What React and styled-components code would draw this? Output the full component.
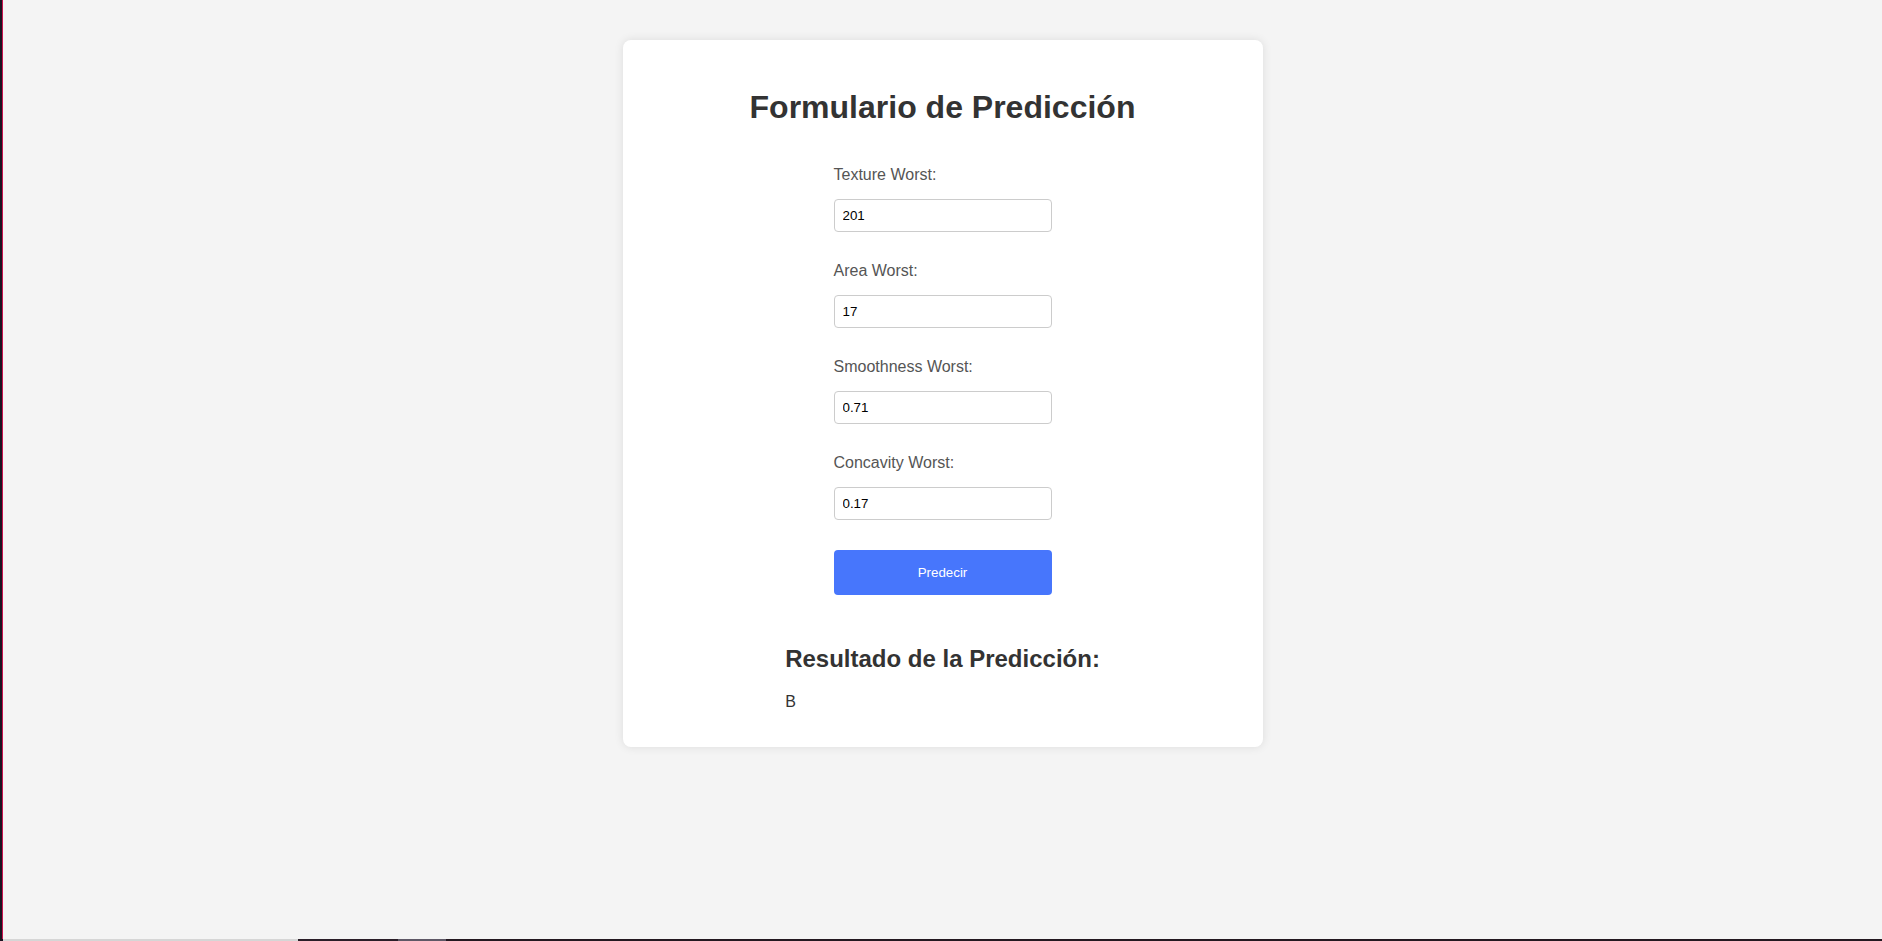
import React from "react";
import styled, { createGlobalStyle } from "styled-components";

const GlobalStyle = createGlobalStyle`
  html, body {
    margin: 0;
    padding: 0;
    background: #f4f4f4;
    font-family: "Liberation Sans", Arial, sans-serif;
  }
  #root {
    min-height: 100vh;
  }
`;

const Screen = styled.div`
  display: flex;
  flex-direction: column;
  height: 941px;
  overflow: hidden;
`;

const Frame = styled.div`
  flex: 1;
  display: flex;
  flex-direction: row;
  min-height: 0;
`;

const LeftEdge = styled.div`
  width: 2px;
  background: #1b1220;
  border-right: 1px solid #c8124e;
  flex-shrink: 0;
`;

const Main = styled.main`
  flex: 1;
  display: flex;
  justify-content: center;
  align-items: flex-start;
  padding-top: 40px;
  background: #f4f4f4;
`;

const BottomStrip = styled.div`
  height: 2px;
  display: flex;
  background: #231820;
  flex-shrink: 0;
`;

const StripSegment = styled.div`
  width: ${(p) => p.$w}px;
  background: ${(p) => p.$c};
  flex-shrink: 0;
`;

const Card = styled.section`
  width: 640px;
  box-sizing: border-box;
  padding: 20px;
  background: #ffffff;
  border-radius: 8px;
  box-shadow: 0 0 10px rgba(0, 0, 0, 0.1);
  text-align: center;
`;

const Title = styled.h1`
  margin: 29px 0 40px;
  font-size: 32px;
  font-weight: 700;
  line-height: normal;
  color: #333333;
`;

const Form = styled.form`
  width: 218px;
  margin: 0 auto;
  text-align: left;
`;

const Field = styled.div`
  margin-bottom: 30px;
`;

const Label = styled.label`
  display: block;
  font-size: 16px;
  line-height: 18px;
  color: #555555;
  margin-bottom: 15px;
`;

const Input = styled.input`
  display: block;
  width: 100%;
  height: 33px;
  box-sizing: border-box;
  padding: 0 8px;
  border: 1px solid #cccccc;
  border-radius: 4px;
  font-family: "Liberation Sans", Arial, sans-serif;
  font-size: 13.333px;
  color: #000000;
  background: #ffffff;
  outline: none;
`;

const Button = styled.button`
  display: block;
  width: 100%;
  height: 45px;
  border: none;
  border-radius: 4px;
  background: #4776fc;
  color: #ffffff;
  font-family: "Liberation Sans", Arial, sans-serif;
  font-size: 13.333px;
  cursor: pointer;
`;

const Result = styled.div`
  display: inline-block;
  text-align: left;
  margin-top: 50px;
`;

const ResultTitle = styled.h2`
  margin: 0 0 20px;
  font-size: 24px;
  font-weight: 700;
  line-height: normal;
  color: #333333;
`;

const ResultValue = styled.p`
  margin: 0 0 16px;
  font-size: 16px;
  line-height: normal;
  color: #333333;
`;

const fields = [
  { id: "texture_worst", label: "Texture Worst:", value: "201" },
  { id: "area_worst", label: "Area Worst:", value: "17" },
  { id: "smoothness_worst", label: "Smoothness Worst:", value: "0.71" },
  { id: "concavity_worst", label: "Concavity Worst:", value: "0.17" },
];

export default function App() {
  return (
    <>
      <GlobalStyle />
      <Screen>
        <Frame>
          <LeftEdge />
          <Main>
            <Card>
              <Title>Formulario de Predicción</Title>
              <Form onSubmit={(e) => e.preventDefault()}>
                {fields.map((f) => (
                  <Field key={f.id}>
                    <Label htmlFor={f.id}>{f.label}</Label>
                    <Input id={f.id} type="text" defaultValue={f.value} />
                  </Field>
                ))}
                <Button type="submit">Predecir</Button>
              </Form>
              <Result>
                <ResultTitle>Resultado de la Predicción:</ResultTitle>
                <ResultValue>B</ResultValue>
              </Result>
            </Card>
          </Main>
        </Frame>
        <BottomStrip>
          <StripSegment $w={3} $c="#1b1220" />
          <StripSegment $w={295} $c="#d6d6d6" />
          <StripSegment $w={100} $c="#2a1e28" />
          <StripSegment $w={48} $c="#5e5866" />
        </BottomStrip>
      </Screen>
    </>
  );
}
